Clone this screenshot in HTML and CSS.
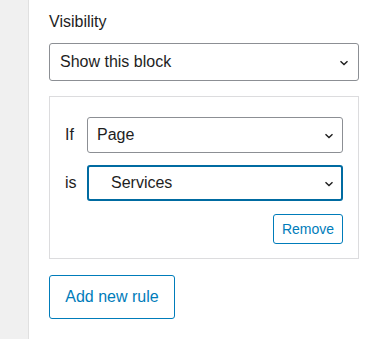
FILE: index.html
```html
<!DOCTYPE html>
<html>
<head>
<meta charset="utf-8">
<link rel="stylesheet" href="styles.css">
</head>
<body>
<div class="layout">
  <div class="gutter"></div>
  <div class="panel">
    <div class="label">Visibility</div>
    <div class="select main">
      <span class="value">Show this block</span>
      <svg class="chev" width="10" height="6" viewBox="0 0 10 6"><path d="M1.5 1.2l3.5 3.3 3.5-3.3" fill="none" stroke="#1e1e1e" stroke-width="1.4"/></svg>
    </div>
    <div class="rules">
      <div class="row">
        <span class="rlabel">If</span>
        <div class="select small">
          <span class="value">Page</span>
          <svg class="chev" width="10" height="6" viewBox="0 0 10 6"><path d="M1.5 1.2l3.5 3.3 3.5-3.3" fill="none" stroke="#1e1e1e" stroke-width="1.4"/></svg>
        </div>
      </div>
      <div class="row">
        <span class="rlabel">is</span>
        <div class="select small focus">
          <span class="value indent">Services</span>
          <svg class="chev" width="10" height="6" viewBox="0 0 10 6"><path d="M1.5 1.2l3.5 3.3 3.5-3.3" fill="none" stroke="#1e1e1e" stroke-width="1.4"/></svg>
        </div>
      </div>
      <div class="actions">
        <button class="btn remove">Remove</button>
      </div>
    </div>
    <button class="btn add">Add new rule</button>
  </div>
</div>
</body>
</html>
```
FILE: styles.css
```css
html, body {
  margin: 0;
  padding: 0;
  background: #fff;
}
body {
  font-family: "Liberation Sans", Arial, sans-serif;
  color: #1e1e1e;
  font-size: 16px;
}
.layout {
  display: flex;
  height: 339px;
}
.gutter {
  width: 28px;
  background: #f0f0f0;
  border-right: 1px solid #e0e0e0;
  flex: none;
}
.panel {
  padding: 12px 8px 0 20px;
  width: 310px;
  display: flex;
  flex-direction: column;
  align-items: flex-start;
}
.label {
  line-height: 20px;
  height: 20px;
  margin-bottom: 11px;
}
.select {
  box-sizing: border-box;
  display: flex;
  align-items: center;
  justify-content: space-between;
  border: 1px solid #8c8f94;
  border-radius: 3px;
  background: #fff;
}
.select.main {
  width: 310px;
  height: 38px;
  padding: 0 9px 0 10px;
}
.select.small {
  width: 256px;
  height: 36px;
  padding: 0 8px 0 9px;
}
.select.focus {
  border: 2px solid #006ba1;
  padding: 0 7px 0 8px;
}
.value.indent {
  padding-left: 14px;
}
.chev {
  display: block;
  margin-top: 1px;
}
.rules {
  box-sizing: border-box;
  width: 310px;
  margin-top: 15px;
  border: 1px solid #dcdcde;
  padding: 20px 15px 14px 15px;
  display: flex;
  flex-direction: column;
}
.row {
  display: flex;
  align-items: center;
  margin-bottom: 12px;
}
.rlabel {
  width: 22px;
  flex: none;
}
.actions {
  display: flex;
  justify-content: flex-end;
  margin-top: 1px;
}
.btn {
  font-family: "Liberation Sans", Arial, sans-serif;
  background: #fff;
  color: #007cba;
  border: 1px solid #007cba;
  border-radius: 3px;
  cursor: pointer;
  box-sizing: border-box;
}
.btn.remove {
  height: 30px;
  width: 70px;
  font-size: 14px;
  padding: 0;
}
.btn.add {
  margin-top: 16px;
  height: 44px;
  width: 126px;
  font-size: 16px;
  padding: 0;
}
```
